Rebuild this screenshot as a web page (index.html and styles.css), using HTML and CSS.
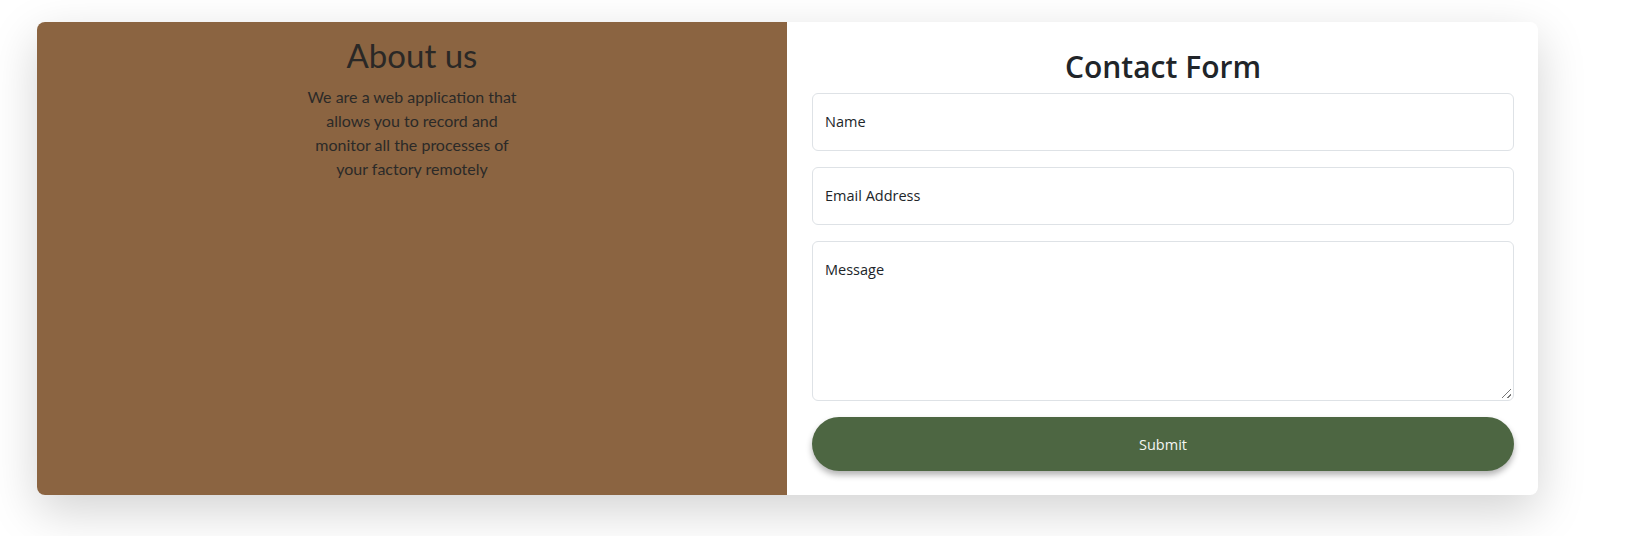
FILE: index.html
```html
<!DOCTYPE html>
<html lang="en">
<head>
<meta charset="utf-8">
<title>About us / Contact Form</title>
<link rel="stylesheet" href="styles.css">
</head>
<body>
<main class="page">
  <section class="card">
    <div class="about">
      <h2 class="about-title">About us</h2>
      <p class="about-text">We are a web application that<br>allows you to record and<br>monitor all the processes of<br>your factory remotely</p>
    </div>
    <div class="contact">
      <h1 class="contact-title">Contact Form</h1>
      <form class="form">
        <label class="field"><span class="field-label">Name</span></label>
        <label class="field"><span class="field-label">Email Address</span></label>
        <label class="field field-area"><span class="field-label">Message</span><span class="grip"></span></label>
        <button type="button" class="submit">Submit</button>
      </form>
    </div>
  </section>
</main>
</body>
</html>
```

FILE: styles.css
```css
* { box-sizing: border-box; }

html, body {
  margin: 0;
  padding: 0;
  background: #ffffff;
}

.page {
  padding: 22px 94px 41px 37px;
}

.card {
  display: grid;
  grid-template-columns: 750px 1fr;
  height: 473px;
  border-radius: 8px;
  background: #ffffff;
  box-shadow: 0 16px 48px rgba(0, 0, 0, 0.175);
}

.about {
  background: #8b6441;
  border-radius: 8px 0 0 8px;
  padding-top: 14px;
  display: flex;
  flex-direction: column;
  align-items: center;
  color: #212529;
  font-family: "Lato", "Noto Sans", sans-serif;
}

.about-title {
  margin: 0 0 9px;
  font-size: 33px;
  font-weight: 400;
  line-height: 1.2;
  color: #2a2826;
}

.about-text {
  margin: 0;
  text-align: center;
  font-size: 16px;
  line-height: 24px;
  color: #2b2a28;
}

.contact {
  padding: 26px 24px 24px 25px;
  font-family: "Open Sans", "Noto Sans", sans-serif;
  color: #212529;
}

.contact-title {
  margin: 0 0 7px;
  text-align: center;
  font-size: 30px;
  font-weight: 600;
  line-height: 38px;
  color: #212529;
}

.form {
  display: flex;
  flex-direction: column;
  gap: 16px;
}

.field {
  position: relative;
  display: block;
  height: 58px;
  border: 1px solid #dee2e6;
  border-radius: 6px;
  background: #ffffff;
  padding: 16px 12px;
}

.field-area {
  height: 160px;
}

.field-label {
  display: block;
  font-size: 14.5px;
  line-height: 24px;
  color: #212529;
}

.grip {
  position: absolute;
  right: 2px;
  bottom: 2px;
  width: 9px;
  height: 9px;
  background:
    linear-gradient(135deg, transparent 45%, #777 45%, #777 55%, transparent 55%) ,
    linear-gradient(135deg, transparent 75%, #777 75%, #777 85%, transparent 85%);
}

.submit {
  height: 54px;
  border: none;
  border-radius: 27px;
  background: #4d6642;
  color: #f4f6f2;
  font-family: "Open Sans", "Noto Sans", sans-serif;
  font-size: 14.5px;
  box-shadow: 0 4px 6px rgba(0, 0, 0, 0.3);
  cursor: pointer;
}
```
